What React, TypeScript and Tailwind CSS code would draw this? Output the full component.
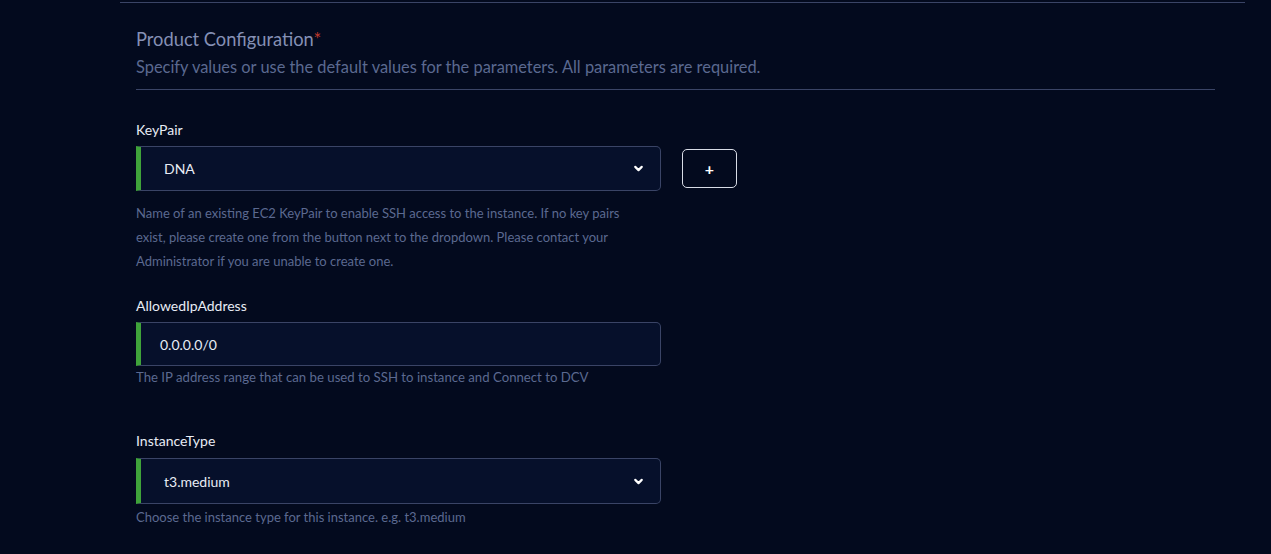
import { ChevronDown } from "lucide-react";

const fieldBox =
  "flex w-[525px] items-center rounded-r-[5px] border border-l-[5px] border-[#3a4466] border-l-[#3fa33a] bg-[#06102b]";

function SelectField({ value, tall }: { value: string; tall?: boolean }) {
  return (
    <div className={`${fieldBox} ${tall ? "h-[46px]" : "h-[45px]"}`}>
      <span className="flex-1 pl-[23px] text-[14px] text-[#e8ecf5]">{value}</span>
      <ChevronDown className="mr-[15px] h-[13px] w-[13px] text-white" strokeWidth={4} />
    </div>
  );
}

export default function App() {
  return (
    <div className="min-h-[554px] bg-[#030a1e] pt-[2px] font-['Lato',sans-serif]">
      <div className="ml-[120px] w-[1125px] border-t border-[#3a4466] pt-[24px]">
        <div className="ml-4 w-[1079px]">
          <h2 className="text-[18.3px] leading-6 text-[#8590b5]">
            Product Configuration<span className="text-[#c0392b]">*</span>
          </h2>
          <p className="mt-[4px] text-[16.4px] leading-6 text-[#5b6990]">
            Specify values or use the default values for the parameters. All parameters are required.
          </p>
          <div className="mt-[10px] border-t border-[#3a4466]" />

          <div className="mt-[30px]">
            <label className="block text-[14px] leading-5 text-[#e8ecf5]">KeyPair</label>
            <div className="mt-[6px] flex items-center gap-[21px]">
              <SelectField value="DNA" />
              <button className="flex h-[39px] w-[55px] items-center justify-center rounded-[5px] border border-[#d8dce6] text-[16px] font-bold text-white">
                +
              </button>
            </div>
            <p className="mt-[10px] w-[500px] text-[13px] leading-6 text-[#5b6990]">
              Name of an existing EC2 KeyPair to enable SSH access to the instance. If no key pairs exist, please create
              one from the button next to the dropdown. Please contact your Administrator if you are unable to create
              one.
            </p>
          </div>

          <div className="mt-[23px]">
            <label className="block text-[14px] leading-5 text-[#e8ecf5]">AllowedIpAddress</label>
            <div className={`mt-[6px] ${fieldBox} h-[44px]`}>
              <span className="pl-[19px] text-[14px] text-[#e8ecf5]">0.0.0.0/0</span>
            </div>
            <p className="mt-[-1px] text-[13.2px] leading-6 text-[#5b6990]">
              The IP address range that can be used to SSH to instance and Connect to DCV
            </p>
          </div>

          <div className="mt-[42px]">
            <label className="block text-[14px] leading-5 text-[#e8ecf5]">InstanceType</label>
            <div className="mt-[7px]">
              <SelectField value="t3.medium" tall />
            </div>
            <p className="mt-[1px] text-[13px] leading-6 text-[#5b6990]">
              Choose the instance type for this instance. e.g. t3.medium
            </p>
          </div>
        </div>
      </div>
    </div>
  );
}
